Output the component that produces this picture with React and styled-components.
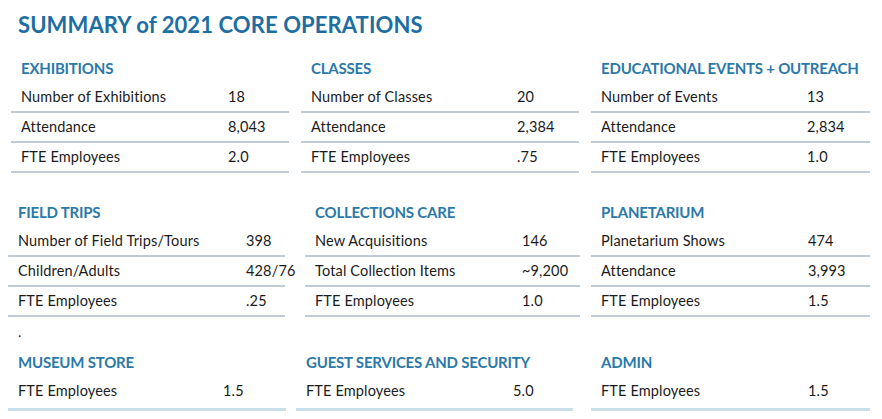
import styled, { createGlobalStyle } from 'styled-components';

const GlobalStyle = createGlobalStyle`
  body {
    margin: 0;
    background: #ffffff;
    font-family: Lato, 'Liberation Sans', sans-serif;
    color: #1b1b1b;
  }
`;

const Page = styled.main`
  width: 882px;
  height: 419px;
  padding-top: 14px;
  box-sizing: border-box;
  overflow: hidden;
  background: #ffffff;
`;

const Title = styled.h1`
  margin: 0 0 0 18px;
  font-size: 22px;
  line-height: 22px;
  font-weight: 700;
  color: #1c6ea3;
  letter-spacing: 0.1px;
`;

const Band = styled.div`
  display: flex;
  margin-top: ${props => props.$top || '0'};
`;

const Section = styled.section`
  width: ${props => props.$w}px;
  margin-left: ${props => props.$ml}px;
  flex-shrink: 0;
`;

const Heading = styled.h2`
  margin: 0 0 6px 0;
  padding-left: 10px;
  font-size: 15px;
  line-height: 18px;
  font-weight: 700;
  color: #2a79a9;
  letter-spacing: -0.2px;
  white-space: nowrap;
`;

const Row = styled.div`
  display: flex;
  height: 28px;
  padding-left: 10px;
  padding-bottom: ${props => props.$extra || 0}px;
  border-bottom: ${props => props.$soft ? '3px solid #c9dfe9' : '2px solid #bfcbd5'};
  font-size: 14.5px;
  line-height: 28px;
  letter-spacing: 0.15px;
  white-space: nowrap;
`;

const Label = styled.span`
  width: ${props => props.$valueX - 10}px;
  flex-shrink: 0;
`;

const Value = styled.span``;

const Note = styled.div`
  margin-top: 6px;
  padding-left: 18px;
  font-size: 14px;
  line-height: 18px;
`;

const bands = [
  {
    top: '23px',
    sections: [
      { ml: 11, w: 278, vx: 217, title: 'EXHIBITIONS', rows: [['Number of Exhibitions', '18'], ['Attendance', '8,043'], ['FTE Employees', '2.0']] },
      { ml: 12, w: 278, vx: 216, title: 'CLASSES', rows: [['Number of Classes', '20'], ['Attendance', '2,384'], ['FTE Employees', '.75']] },
      { ml: 12, w: 279, vx: 216, title: 'EDUCATIONAL EVENTS + OUTREACH', rows: [['Number of Events', '13'], ['Attendance', '2,834'], ['FTE Employees', '1.0']] },
    ],
  },
  {
    top: '30px',
    sections: [
      { ml: 8, w: 277, vx: 238, title: 'FIELD TRIPS', rows: [['Number of Field Trips/Tours', '398'], ['Children/Adults', '428/76'], ['FTE Employees', '.25']] },
      { ml: 20, w: 275, vx: 217, title: 'COLLECTIONS CARE', rows: [['New Acquisitions', '146'], ['Total Collection Items', '~9,200'], ['FTE Employees', '1.0']] },
      { ml: 11, w: 279, vx: 217, title: 'PLANETARIUM', rows: [['Planetarium Shows', '474'], ['Attendance', '3,993'], ['FTE Employees', '1.5']] },
    ],
  },
];

const lastBand = [
  { ml: 8, w: 278, vx: 215, title: 'MUSEUM STORE', value: '1.5' },
  { ml: 10, w: 277, vx: 217, title: 'GUEST SERVICES AND SECURITY', value: '5.0' },
  { ml: 18, w: 279, vx: 217, title: 'ADMIN', value: '1.5' },
];

function App() {
  return (
    <Page>
      <GlobalStyle />
      <Title>SUMMARY of 2021 CORE OPERATIONS</Title>
      {bands.map(band => (
        <Band key={band.top + band.sections[0].title} $top={band.top}>
          {band.sections.map(s => (
            <Section key={s.title} $ml={s.ml} $w={s.w}>
              <Heading>{s.title}</Heading>
              {s.rows.map(([label, value]) => (
                <Row key={label}>
                  <Label $valueX={s.vx}>{label}</Label>
                  <Value>{value}</Value>
                </Row>
              ))}
            </Section>
          ))}
        </Band>
      ))}
      <Note>.</Note>
      <Band $top="12px">
        {lastBand.map(s => (
          <Section key={s.title} $ml={s.ml} $w={s.w}>
            <Heading>{s.title}</Heading>
            <Row $soft $extra={3}>
              <Label $valueX={s.vx}>FTE Employees</Label>
              <Value>{s.value}</Value>
            </Row>
          </Section>
        ))}
      </Band>
    </Page>
  );
}

export default App;
